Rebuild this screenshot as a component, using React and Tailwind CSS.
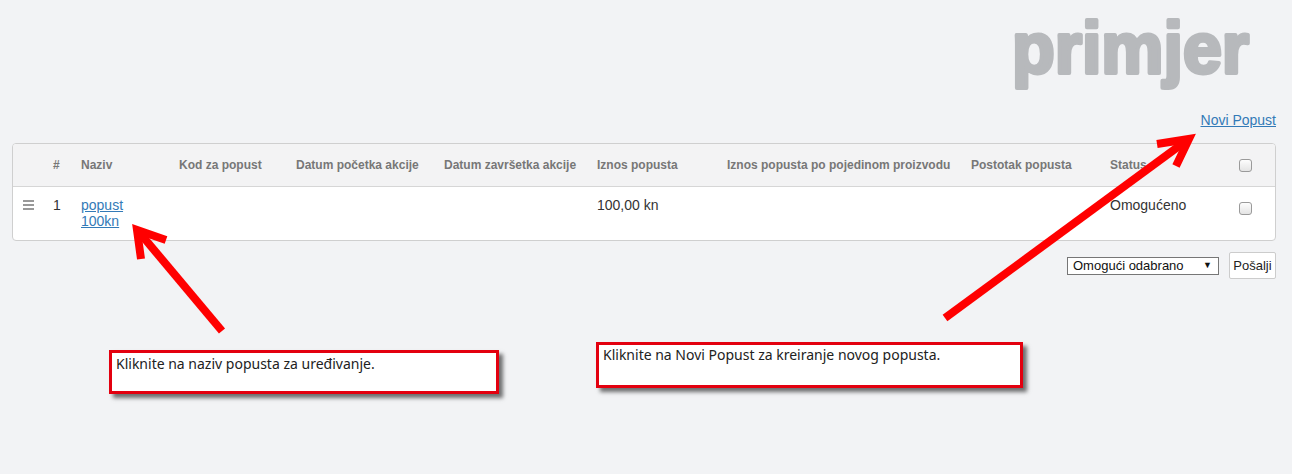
import React from "react";

const cols = "grid-cols-[40px_28px_98px_117px_148px_153px_130px_244px_139px_129px_1fr]";

function Check() {
  return (
    <span className="inline-block w-[13px] h-[13px] rounded-[3px] border border-[#9a9a9a] bg-gradient-to-b from-[#fdfdfd] to-[#e4e4e4]" />
  );
}

export default function App() {
  return (
    <div
      className="relative w-[1292px] min-h-[474px] bg-[#f2f3f5] pl-3 pr-4 pt-[10px]"
      style={{ fontFamily: '"Liberation Sans", Arial, sans-serif' }}
    >
      <div className="flex justify-end pr-[25px]">
        <svg width="240" height="90" viewBox="0 0 240 90" overflow="visible">
          <text
            x="1"
            y="63"
            textLength="237"
            lengthAdjust="spacingAndGlyphs"
            fill="#b7b9bc"
            fontFamily="Liberation Sans, Arial, sans-serif"
            fontWeight="900"
            fontSize="72"
            stroke="#b7b9bc"
            strokeWidth="4"
            strokeLinejoin="round"
          >
            primjer
          </text>
        </svg>
      </div>
      <div className="mt-[10px] text-right text-[14px] leading-[20px]">
        <a className="text-[#337ab7] underline" href="#">Novi Popust</a>
      </div>

      <div className="mt-[13px] rounded-[4px] border border-[#cfcfcf] overflow-hidden bg-white">
        <div className={`grid ${cols} h-[43px] items-center bg-[#f3f3f4] border-b border-[#d6d6d6] text-[12px] font-bold text-[#777]`}>
          <div></div>
          <div>#</div>
          <div>Naziv</div>
          <div>Kod za popust</div>
          <div>Datum početka akcije</div>
          <div>Datum završetka akcije</div>
          <div>Iznos popusta</div>
          <div>Iznos popusta po pojedinom proizvodu</div>
          <div>Postotak popusta</div>
          <div>Status</div>
          <div className="flex"><Check /></div>
        </div>
        <div className={`grid ${cols} items-start pt-[10px] pb-[11px] text-[14px] leading-[16px] text-[#333]`}>
          <div className="pl-[10px] pt-[3px]">
            <svg width="12" height="10" viewBox="0 0 12 10">
              <rect x="0" y="0" width="11" height="2" fill="#999" />
              <rect x="0" y="4" width="11" height="2" fill="#999" />
              <rect x="0" y="8" width="11" height="2" fill="#999" />
            </svg>
          </div>
          <div>1</div>
          <div>
            <a href="#" className="text-[#337ab7] underline">popust<br />100kn</a>
          </div>
          <div></div>
          <div></div>
          <div></div>
          <div>100,00 kn</div>
          <div></div>
          <div></div>
          <div>Omogućeno</div>
          <div className="flex pt-[5px]"><Check /></div>
        </div>
      </div>

      <div className="mt-[11px] flex justify-end items-center gap-[10px]">
        <div className="w-[152px] h-[18px] border border-[#767676] bg-white flex items-center justify-between pl-[5px] pr-[6px] text-[13px] text-[#111]">
          <span>Omogući odabrano</span>
          <span className="text-[9px]">▼</span>
        </div>
        <div className="h-[27px] w-[47px] flex items-center justify-center border border-[#cccccc] rounded-[2px] bg-white text-[13px] text-[#222]">
          Pošalji
        </div>
      </div>

      <div
        className="absolute left-[109px] top-[350px] w-[390px] h-[44px] border-[3px] border-[#e3000f] bg-white pl-[4px] pt-[1px] text-[14px] leading-[19px] text-[#222] shadow-[4px_4px_4px_rgba(0,0,0,0.55)]"
        style={{ fontFamily: '"Noto Sans", "Open Sans", sans-serif' }}
      >
        Kliknite na naziv popusta za uređivanje.
      </div>
      <div
        className="absolute left-[596px] top-[342px] w-[427px] h-[46px] border-[3px] border-[#e3000f] bg-white pl-[4px] pt-0 text-[14px] leading-[19px] text-[#222] shadow-[4px_4px_4px_rgba(0,0,0,0.55)]"
        style={{ fontFamily: '"Noto Sans", "Open Sans", sans-serif' }}
      >
        Kliknite na Novi Popust za kreiranje novog popusta.
      </div>

      <svg className="absolute left-0 top-0 pointer-events-none" width="1292" height="474">
        <g stroke="#ff0000" strokeWidth="8" fill="none" strokeLinejoin="miter" strokeLinecap="butt">
          <line x1="222" y1="331" x2="139" y2="232" />
          <polyline points="141,259 137,230 166,240" />
          <line x1="945" y1="318" x2="1186" y2="141" />
          <polyline points="1157,144 1189,139 1176,166" />
        </g>
      </svg>
    </div>
  );
}
